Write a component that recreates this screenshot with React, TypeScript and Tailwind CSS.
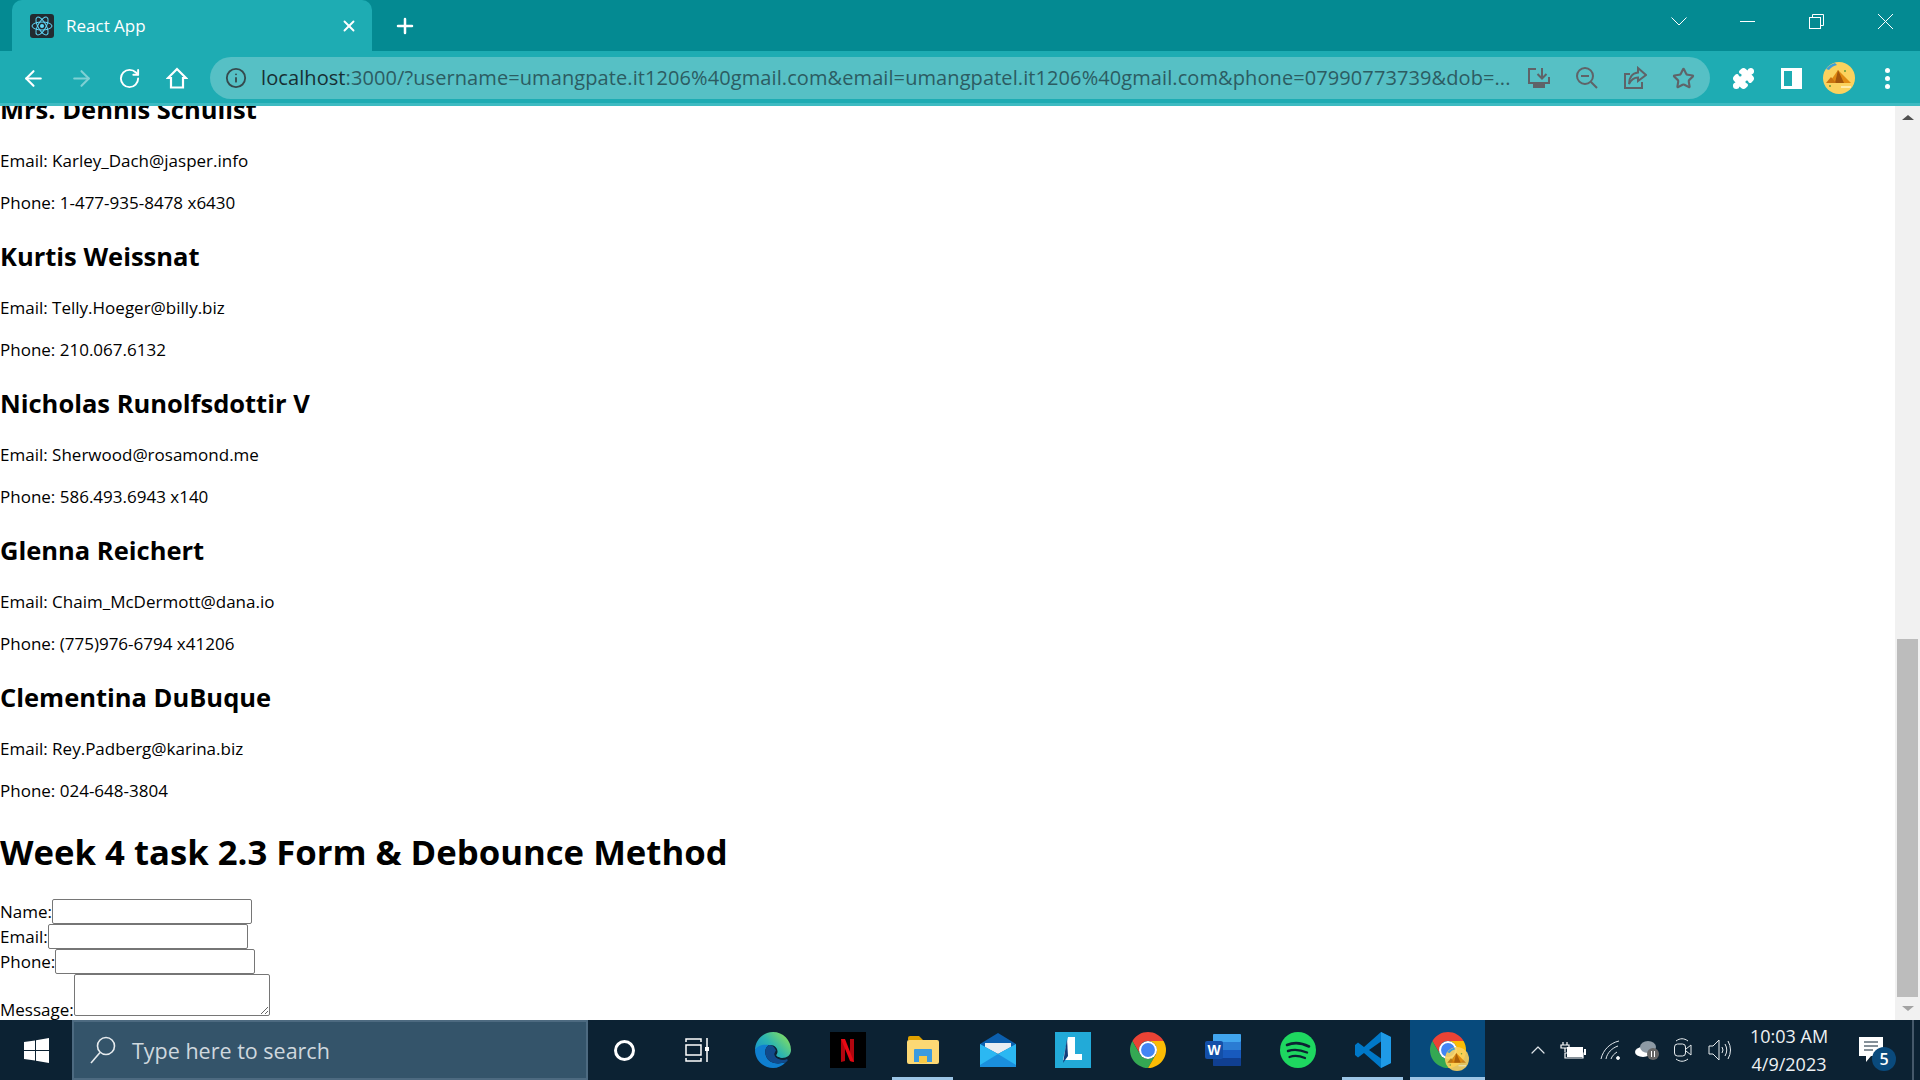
import React from 'react';
import { ArrowLeft, ArrowRight, RotateCw, Info, Star, Puzzle, X, Plus, ChevronUp } from 'lucide-react';

const contacts = [
  { name: 'Kurtis Weissnat', email: 'Telly.Hoeger@billy.biz', phone: '210.067.6132' },
  { name: 'Nicholas Runolfsdottir V', email: 'Sherwood@rosamond.me', phone: '586.493.6943 x140' },
  { name: 'Glenna Reichert', email: 'Chaim_McDermott@dana.io', phone: '(775)976-6794 x41206' },
  { name: 'Clementina DuBuque', email: 'Rey.Padberg@karina.biz', phone: '024-648-3804' },
];

const ChromeLogo = ({ size = 36 }: { size?: number }) => (
  <svg width={size} height={size} viewBox="2 2 44 44">
    <path d="M4.95 13A22 22 0 0 1 43.05 13H24A11 11 0 0 0 14.47 29.5Z" fill="#ea4335" />
    <path d="M4.95 13A22 22 0 0 0 24 46L33.5 29.5A11 11 0 0 1 14.47 29.5Z" fill="#34a853" />
    <path d="M43.05 13A22 22 0 0 1 24 46L33.5 29.5A11 11 0 0 0 24 13Z" fill="#fbbc04" />
    <circle cx="24" cy="24" r="11" fill="#fff" />
    <circle cx="24" cy="24" r="8.5" fill="#4285f4" />
  </svg>
);

const Avatar = ({ size = 32 }: { size?: number }) => (
  <svg width={size} height={size} viewBox="0 0 32 32">
    <circle cx="16" cy="16" r="16" fill="#fbd25e" />
    <path d="M3 7A16 16 0 0 1 12 1L14 3A14 14 0 0 0 6 8Z" fill="#3d9fd8" />
    <path d="M15 8L28 21H6Z" fill="#e08a12" />
    <path d="M15 8L21 21H12Z" fill="#a3570b" />
    <path d="M8 15L13 21H3Z" fill="#c9730f" />
    <circle cx="7" cy="24" r="1" fill="#6a9a3a" />
    <circle cx="22" cy="9" r="1" fill="#6a9a3a" />
    <path d="M18 25H28" stroke="#fff3c4" strokeWidth="1.5" />
  </svg>
);

const ToolButton = ({ children }: { children: React.ReactNode }) => (
  <div className="w-[48px] h-[42px] flex items-center justify-center">{children}</div>
);

const WindowButton = ({ children }: { children: React.ReactNode }) => (
  <div className="w-[69px] h-[43px] flex items-center justify-center">{children}</div>
);

const TaskItem = ({ children, active, running, className = 'w-[75px]' }: { children: React.ReactNode; active?: boolean; running?: boolean; className?: string }) => (
  <div className={`relative h-full flex items-center justify-center ${className} ${active ? 'bg-[#074a7c]' : ''}`}>
    {children}
    {active && <div className="absolute left-0 right-0 bottom-0 h-[3px] bg-[#9cc5e6]" />}
    {running && <div className="absolute left-[7px] right-[7px] bottom-0 h-[3px] bg-[#9cc5e6]" />}
  </div>
);

const App: React.FC = () => {
  return (
    <div className="w-[1920px] h-[1080px] flex flex-col overflow-hidden bg-white font-['Open_Sans',sans-serif]">
      {/* tab strip */}
      <div className="h-[51px] shrink-0 bg-[#048a92] flex items-end pl-[12px] text-white">
        <div className="w-[360px] h-[51px] bg-[#1eacb3] rounded-t-[10px] flex items-center pl-[18px] pr-[14px]">
          <svg width="24" height="24" viewBox="0 0 24 24" className="shrink-0">
            <rect width="24" height="24" rx="3" fill="#222b30" />
            <g fill="none" stroke="#61dafb" strokeWidth="1">
              <ellipse cx="12" cy="12" rx="10" ry="4" />
              <ellipse cx="12" cy="12" rx="10" ry="4" transform="rotate(60 12 12)" />
              <ellipse cx="12" cy="12" rx="10" ry="4" transform="rotate(120 12 12)" />
            </g>
            <circle cx="12" cy="12" r="2" fill="#61dafb" />
          </svg>
          <span className="ml-[12px] text-[17px] flex-1">React App</span>
          <X size={18} strokeWidth={2.5} />
        </div>
        <div className="h-[51px] ml-[21px] flex items-center">
          <Plus size={24} strokeWidth={2.5} />
        </div>
        <div className="flex-1" />
        <div className="h-[43px] self-start flex items-center">
          <WindowButton>
            <svg width="16" height="9" viewBox="0 0 16 9" fill="none" stroke="#fff"><path d="M0.5 0.5L8 8L15.5 0.5" /></svg>
          </WindowButton>
          <WindowButton>
            <svg width="15" height="1" viewBox="0 0 15 1"><rect width="15" height="1" fill="#fff" /></svg>
          </WindowButton>
          <WindowButton>
            <svg width="15" height="15" viewBox="0 0 15 15" fill="none" stroke="#fff">
              <rect x="0.5" y="3.5" width="11" height="11" />
              <path d="M3.5 3V0.5H14.5V11.5H12" />
            </svg>
          </WindowButton>
          <WindowButton>
            <svg width="15" height="15" viewBox="0 0 15 15" fill="none" stroke="#fff"><path d="M0 0L15 15M15 0L0 15" /></svg>
          </WindowButton>
        </div>
      </div>

      {/* toolbar */}
      <div className="h-[55px] shrink-0 bg-[#1eacb3] border-b-[3px] border-[#3ebbc2] flex pt-[6px] pl-[9px] text-white">
        <ToolButton><ArrowLeft size={25} strokeWidth={2} /></ToolButton>
        <ToolButton><ArrowRight size={25} strokeWidth={2} className="text-[#7fd0d4]" /></ToolButton>
        <ToolButton><RotateCw size={23} strokeWidth={2} /></ToolButton>
        <ToolButton>
          <svg width="22" height="22" viewBox="0 0 22 22" fill="none" stroke="#fff" strokeWidth="2.2">
            <path d="M11 2L2 11H5V20.5H17V11H20Z" />
          </svg>
        </ToolButton>
        <div className="ml-[9px] w-[1500px] h-[42px] rounded-full bg-[#56c0c5] flex items-center pl-[15px] pr-[3px]">
          <Info size={22} strokeWidth={2} className="text-[#35494d] shrink-0" />
          <div className="ml-[14px] flex-1 min-w-0 text-[20px] tracking-[0.09px] whitespace-nowrap overflow-hidden text-[#2c5c62]">
            <span className="text-[#172f33]">localhost</span>:3000/?username=umangpate.it1206%40gmail.com&amp;email=umangpatel.it1206%40gmail.com&amp;phone=07990773739&amp;dob=...
          </div>
          <ToolButton>
            <svg width="24" height="24" viewBox="0 0 24 24" fill="none" stroke="#5f6368" strokeWidth="2">
              <path d="M9 3H2V17H22V11" />
              <path d="M15 2V12M10.5 8L15 12.5L19.5 8" />
              <path d="M6 20H18" strokeWidth="4" />
            </svg>
          </ToolButton>
          <ToolButton>
            <svg width="24" height="24" viewBox="0 0 24 24" fill="none" stroke="#5f6368" strokeWidth="2">
              <circle cx="10" cy="10" r="8" />
              <path d="M6 10H14M16 16L22 22" />
            </svg>
          </ToolButton>
          <ToolButton>
            <svg width="24" height="24" viewBox="0 0 24 24" fill="none" stroke="#5f6368" strokeWidth="2">
              <path d="M7 8H2V22H19V16" />
              <path d="M15 2L23 9L15 15V11.5C10 11.5 8 14 6 18C6 12 9 7 15 6.5Z" />
            </svg>
          </ToolButton>
          <ToolButton><Star size={23} strokeWidth={2.2} className="text-[#5f6368]" /></ToolButton>
        </div>
        <div className="ml-[9px] flex">
          <ToolButton><Puzzle size={23} strokeWidth={2} fill="#fff" /></ToolButton>
          <ToolButton>
            <div className="w-[21px] h-[21px] border-[3px] border-white border-r-[10px]" />
          </ToolButton>
          <ToolButton><Avatar /></ToolButton>
          <ToolButton>
            <div className="flex flex-col gap-[3px]">
              <div className="w-[5px] h-[5px] rounded-full bg-white" />
              <div className="w-[5px] h-[5px] rounded-full bg-white" />
              <div className="w-[5px] h-[5px] rounded-full bg-white" />
            </div>
          </ToolButton>
        </div>
      </div>

      {/* page */}
      <div className="flex-1 min-h-0 flex">
        <div className="flex-1 min-w-0 overflow-hidden text-[17px] leading-[24px] text-black">
          <div className="-mt-[15px]">
            <h2 className="text-[25.5px] leading-[36px] font-bold mb-[22px]">Mrs. Dennis Schulist</h2>
            <p className="mb-[18px]">Email: Karley_Dach@jasper.info</p>
            <p>Phone: 1-477-935-8478 x6430</p>
            {contacts.map((c) => (
              <div key={c.name}>
                <h2 className="text-[25.5px] leading-[36px] font-bold mt-[23px] mb-[22px]">{c.name}</h2>
                <p className="mb-[18px]">Email: {c.email}</p>
                <p>Phone: {c.phone}</p>
              </div>
            ))}
            <h1 className="text-[34.7px] leading-[48px] font-bold mt-[25px] mb-[23px]">Week 4 task 2.3 Form &amp; Debounce Method</h1>
            <form>
              <label>Name:</label>
              <input className="w-[200px] h-[25px] border border-[#767676] rounded-[2px] align-baseline" />
              <br />
              <label>Email:</label>
              <input className="w-[200px] h-[25px] border border-[#767676] rounded-[2px] align-baseline" />
              <br />
              <label>Phone:</label>
              <input className="w-[200px] h-[25px] border border-[#767676] rounded-[2px] align-baseline" />
              <br />
              <label>Message:</label>
              <textarea className="w-[196px] h-[42px] border border-[#767676] rounded-[2px] resize align-baseline" />
            </form>
          </div>
        </div>
        {/* scrollbar */}
        <div className="w-[25px] shrink-0 bg-[#f1f1f1] flex flex-col items-center">
          <div className="h-[23px] flex items-center justify-center">
            <div className="w-0 h-0 border-x-[6px] border-x-transparent border-b-[5px] border-b-[#505050]" />
          </div>
          <div className="flex-1" />
          <div className="w-[21px] h-[358px] bg-[#bcbcbc]" />
          <div className="h-[23px] flex items-center justify-center">
            <div className="w-0 h-0 border-x-[6px] border-x-transparent border-t-[5px] border-t-[#a3a3a3]" />
          </div>
        </div>
      </div>

      {/* taskbar */}
      <div className="h-[60px] shrink-0 bg-[#0c2233] flex text-white">
        <div className="w-[72px] flex items-center justify-center">
          <svg width="25" height="25" viewBox="0 0 25 25" fill="#fff">
            <path d="M0 4L11 2.4V12H0ZM12 2.2L25 0V12H12ZM0 13H11V22.6L0 21ZM12 13H25V25L12 22.8Z" />
          </svg>
        </div>
        <div className="w-[516px] bg-[#34546a] border-2 border-[#4d6a80] flex items-center pl-[16px]">
          <svg width="26" height="28" viewBox="0 0 26 28" fill="none" stroke="#e6ebee" strokeWidth="1.6">
            <circle cx="16" cy="10" r="8.5" />
            <path d="M10 16.5L1 27" />
          </svg>
          <span className="ml-[16px] pt-[2px] text-[21.5px] text-[#cfd8de]">Type here to search</span>
        </div>
        <TaskItem className="w-[72px]">
          <div className="w-[21px] h-[21px] rounded-full border-[3px] border-white" />
        </TaskItem>
        <TaskItem>
          <svg width="24" height="24" viewBox="0 0 24 24" fill="none" stroke="#fff" strokeWidth="1.5" className="mr-[2px]">
            <path d="M1 4V1H16V4M1 7H16V17H1ZM1 20V23H16V20M22 0V24" />
            <rect x="20" y="9" width="4" height="4" fill="#fff" stroke="none" />
          </svg>
        </TaskItem>
        <TaskItem>
          <svg width="36" height="36" viewBox="0 0 36 36">
            <defs>
              <linearGradient id="edgeTop" x1="0" y1="1" x2="1" y2="0.3">
                <stop offset="0" stopColor="#0f87d6" />
                <stop offset="0.55" stopColor="#2cb5b0" />
                <stop offset="1" stopColor="#7fdc64" />
              </linearGradient>
            </defs>
            <path d="M0 18C0 8 8 0 18 0C28 0 36 8 36 18C36 23 32 26 27 26C23 26 21 24 21 23C24 21 23 13 15 13C8 13 3 16 0 18Z" fill="url(#edgeTop)" />
            <path d="M0 18C3 13 9 12 14 13C10 15 9 21 12 26C15 31 22 33 31 30C27 34 23 36 18 36C8 36 0 28 0 18Z" fill="#0f7fd0" />
            <path d="M14 13C10 15 9 21 12 26C15 31 22 33 31 30C33 29 33 28 32 27C29 28 25 28 22 26C19 24 19 21 21 19C20 15 17 13 14 13Z" fill="#114a8b" />
            <path d="M21 19C19 21 19 24 22 26C25 28 29 28 32 27C28 26 22 26 21 23C22 22 22 20 21 19Z" fill="#0c2233" />
          </svg>
        </TaskItem>
        <TaskItem>
          <div className="w-[36px] h-[36px] bg-black flex items-center justify-center">
            <svg width="13" height="23" viewBox="0 0 13 23">
              <path d="M0 0H4V22L0 23ZM9 0H13V23L9 22Z" fill="#b1060f" />
              <path d="M0 0H4L13 23L9 22Z" fill="#e50914" />
            </svg>
          </div>
        </TaskItem>
        <TaskItem running>
          <svg width="32" height="28" viewBox="0 0 32 28">
            <path d="M1 2Q1 0 3 0H12L16 4H1Z" fill="#e0a100" />
            <rect x="0" y="4" width="32" height="24" rx="2" fill="#fcd874" />
            <path d="M7 14Q7 13 8 13H24Q25 13 25 14V26H7Z" fill="#3b9be0" />
            <path d="M12 20H20V27H12Z" fill="#f7c948" />
          </svg>
        </TaskItem>
        <TaskItem>
          <svg width="36" height="34" viewBox="0 0 36 34">
            <path d="M18 0L36 11V20H0V11Z" fill="#0b5fae" />
            <path d="M5 10H31L31 14L18 21L5 14Z" fill="#e7edf2" />
            <path d="M0 11L18 21L36 11V32Q36 34 34 34H2Q0 34 0 32Z" fill="#2bb8f2" />
            <path d="M0 32L18 21L36 32V34H0Z" fill="#1a8fdd" />
          </svg>
        </TaskItem>
        <TaskItem>
          <svg width="36" height="36" viewBox="0 0 36 36">
            <rect width="36" height="36" fill="#22aad8" />
            <path d="M13 5H20V22H27V28H8Z" fill="#fff" />
            <path d="M12 7L13 24L8 31Z" fill="#123c7a" />
          </svg>
        </TaskItem>
        <TaskItem><ChromeLogo /></TaskItem>
        <TaskItem>
          <svg width="36" height="32" viewBox="0 0 36 32">
            <rect x="8" y="0" width="28" height="32" rx="2" fill="#185abd" />
            <rect x="8" y="0" width="28" height="8" rx="1" fill="#41a5ee" />
            <rect x="8" y="8" width="28" height="8" fill="#2b7cd3" />
            <rect x="8" y="24" width="28" height="8" rx="1" fill="#103f91" />
            <rect x="0" y="7" width="18" height="18" rx="2" fill="#134fa8" />
            <text x="9" y="21" textAnchor="middle" fontSize="14" fontWeight="700" fill="#fff" fontFamily="Liberation Sans, sans-serif">W</text>
          </svg>
        </TaskItem>
        <TaskItem>
          <svg width="36" height="36" viewBox="0 0 36 36" fill="none">
            <circle cx="18" cy="18" r="18" fill="#1ed760" />
            <path d="M7 13C14 10 22 11 29 14.5" stroke="#0c2233" strokeWidth="2.6" strokeLinecap="round" />
            <path d="M8 19C14 17 21 18 27 20.5" stroke="#0c2233" strokeWidth="2.4" strokeLinecap="round" />
            <path d="M9.5 25C15 23 20 24 25 26" stroke="#0c2233" strokeWidth="2.2" strokeLinecap="round" />
          </svg>
        </TaskItem>
        <TaskItem running>
          <svg width="36" height="36" viewBox="0 0 36 36">
            <path d="M26 0L36 5V31L26 36L9 21L3 25.5L0 23V13L3 10.5L9 15Z" fill="#0078c8" />
            <path d="M26 0L36 5V31L26 36Z" fill="#1f9ae6" />
            <path d="M26 9.5L14 18L26 26.5Z" fill="#0c2233" />
          </svg>
        </TaskItem>
        <TaskItem active>
          <div className="relative">
            <ChromeLogo />
            <div className="absolute -right-[3px] -bottom-[3px] opacity-90"><Avatar size={24} /></div>
          </div>
        </TaskItem>

        {/* tray */}
        <div className="flex-1 flex items-center relative">
          <ChevronUp size={24} strokeWidth={1.2} className="ml-[41px] text-[#dfe5ea]" />
          <svg width="26" height="18" viewBox="0 0 26 18" fill="none" stroke="#fff" className="ml-[10px]">
            <path d="M3 1V4M7 1V4M1 4H9V7H1ZM5 7V11M5 12H23V17H5Z" strokeWidth="1.2" />
            <rect x="7" y="6" width="16" height="10" fill="#fff" stroke="none" />
            <rect x="24" y="8" width="2" height="6" fill="#fff" stroke="none" />
          </svg>
          <svg width="22" height="20" viewBox="0 0 22 20" fill="none" stroke="#dfe5ea" strokeWidth="1" className="ml-[14px]">
            <path d="M1 19C3 10 10 3 19 1M6 19C7 13 12 8 18 6M11 19C12 16 14 14 17 12" />
            <circle cx="18" cy="18" r="1.5" fill="#fff" />
          </svg>
          <svg width="26" height="20" viewBox="0 0 26 20" className="ml-[12px]">
            <ellipse cx="9" cy="12" rx="8" ry="5" fill="#fff" />
            <ellipse cx="14" cy="7" rx="8" ry="6" fill="#8d9aa5" />
            <circle cx="19" cy="14" r="6" fill="#666" />
            <path d="M17.5 11V17M20.5 11V17" stroke="#fff" />
          </svg>
          <svg width="20" height="24" viewBox="0 0 20 24" fill="none" stroke="#e6ebee" strokeWidth="1" className="ml-[13px]">
            <path d="M3 3C7 0 11 0 15 3M3 21C7 24 11 24 15 21" />
            <rect x="1.5" y="6" width="11" height="12" rx="3" />
            <path d="M13 11L18 7V17L13 13" />
          </svg>
          <svg width="23" height="22" viewBox="0 0 23 22" fill="none" stroke="#e6ebee" strokeWidth="1" className="ml-[15px]">
            <path d="M1 7H5L11 1V21L5 15H1Z" />
            <path d="M14 8Q16 11 14 14M17 5Q20.5 11 17 17M20 2Q25 11 20 20" />
          </svg>
          <div className="w-[100px] ml-[8px] text-[18px] leading-[28px] text-center text-[#eef1f3]">
            <div>10:03 AM</div>
            <div>4/9/2023</div>
          </div>
          <div className="relative ml-[20px]">
            <svg width="26" height="26" viewBox="0 0 26 26">
              <path d="M0 0H24V19H12L7 25V19H0Z" fill="#fff" />
              <path d="M5 5H19M5 9H19M5 13H14" stroke="#0c2233" />
            </svg>
            <div className="absolute -right-[11px] -bottom-[8px] w-[24px] h-[24px] rounded-full bg-[#0a4a7c] text-[16px] font-semibold text-white flex items-center justify-center">5</div>
          </div>
          <div className="absolute right-[6px] top-0 bottom-0 w-[2px] bg-[#45586a]" />
        </div>
      </div>
    </div>
  );
};

export default App;
